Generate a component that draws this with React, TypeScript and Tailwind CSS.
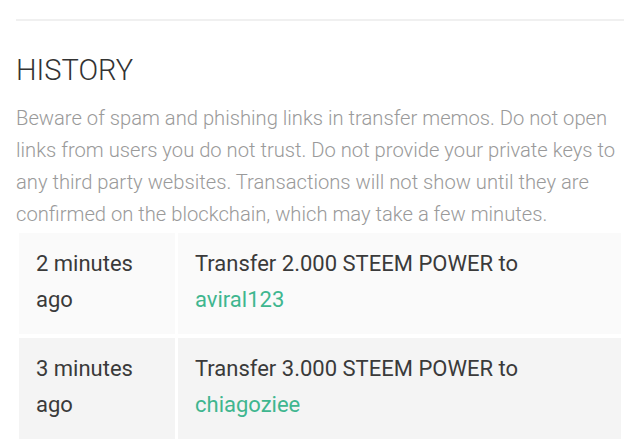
const rows = [
  { when: ["2 minutes", "ago"], amount: "2.000", to: "aviral123", bg: "bg-[#fafafa]" },
  { when: ["3 minutes", "ago"], amount: "3.000", to: "chiagoziee", bg: "bg-[#f4f4f4]" },
];

export default function App() {
  return (
    <div className="min-h-[446px] bg-white px-4 font-['Roboto',sans-serif]">
      <div className="pt-[19px]">
        <hr className="border-t-2 border-[#f0f0f0]" />
      </div>
      <h2 className="mt-[31px] text-[29px] leading-[36px] font-light text-[#333]">HISTORY</h2>
      <p className="mt-[14px] text-[20.2px] leading-[32px] font-light text-[#9a9a9a]">
        Beware of spam and phishing links in transfer memos. Do not open links from users you do not
        trust. Do not provide your private keys to any third party websites. Transactions will not show
        until they are confirmed on the blockchain, which may take a few minutes.
      </p>
      <table className="w-full border-separate border-spacing-x-[3px] border-spacing-y-[4px] -mt-[1px]">
        <tbody>
          {rows.map((r) => (
            <tr key={r.to}>
              <td className={`${r.bg} w-[156px] h-[101px] pl-[17px] pr-3 pb-1 align-middle text-[22px] leading-[36px] text-[#3a3a3a]`}>
                {r.when[0]}
                <br />
                {r.when[1]}
              </td>
              <td className={`${r.bg} h-[101px] pl-[17px] pr-3 pb-1 align-middle text-[22px] leading-[36px] text-[#3a3a3a]`}>
                Transfer {r.amount} STEEM POWER to
                <br />
                <span className="text-[#3fb68f]">{r.to}</span>
              </td>
            </tr>
          ))}
        </tbody>
      </table>
    </div>
  );
}
